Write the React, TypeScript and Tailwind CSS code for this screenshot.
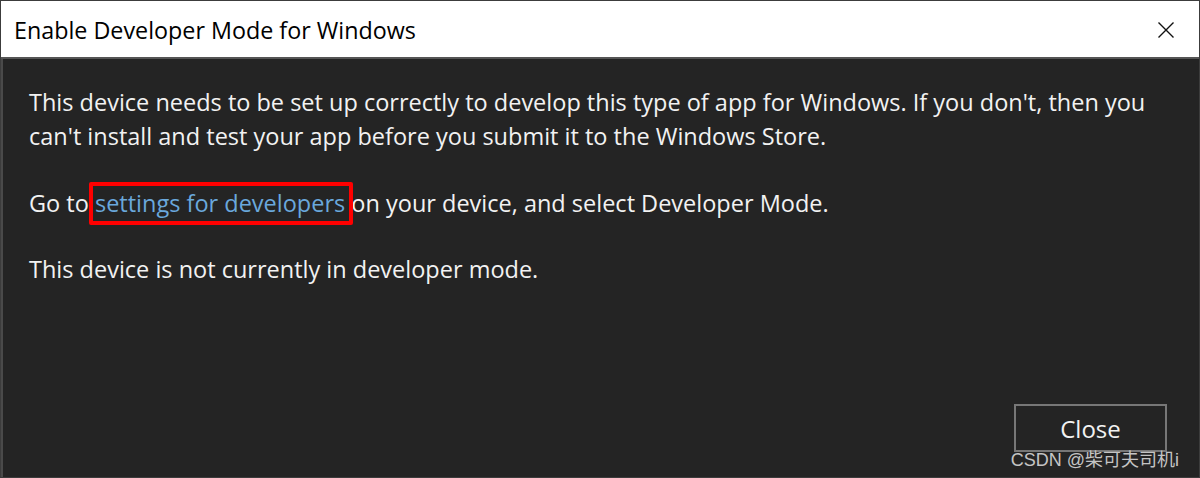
import React from "react";

const FONT = { fontFamily: '"Open Sans", "Noto Sans", sans-serif' };

export default function App() {
  return (
    <div
      className="relative flex h-[478px] w-[1200px] flex-col overflow-hidden border border-[#3c3c3c] bg-[#242424]"
      style={FONT}
    >
      {/* Title bar */}
      <div className="flex h-[58px] shrink-0 items-center justify-between border-b-2 border-[#555555] bg-white pl-[13px] pr-[24px]">
        <h1 className="mt-[4px] text-[23.3px] leading-none text-black">Enable Developer Mode for Windows</h1>
        <svg width="18" height="18" viewBox="0 0 18 18" className="mt-[2px]">
          <path d="M1.5 1.5 L16.5 16.5 M16.5 1.5 L1.5 16.5" stroke="#111" strokeWidth="1.4" fill="none" />
        </svg>
      </div>

      {/* Body */}
      <div className="flex flex-1 flex-col border-l-2 border-[#4a4a4a] pl-[26px] pr-[30px] pt-[26px] text-[23.5px] leading-[34px] text-[#f2f2f2]">
        <p>
          This device needs to be set up correctly to develop this type of app for Windows. If you don't, then you
          can't install and test your app before you submit it to the Windows Store.
        </p>
        <p className="mt-[33px]">
          Go to{" "}
          <span className="relative inline-block text-[#6aa8dc]">
            settings for developers
            <span className="pointer-events-none absolute -left-[6px] -right-[8px] -top-[4px] -bottom-[5px] rounded-[2px] border-[4px] border-[#ff0000]" />
          </span>{" "}
          on your device, and select Developer Mode.
        </p>
        <p className="mt-[32px]">This device is not currently in developer mode.</p>

        <div className="mt-auto mb-[25px] flex justify-end">
          <button className="mr-[2px] h-[48px] w-[153px] border-2 border-[#777777] pt-[2px] text-[24px] text-[#f2f2f2]">
            Close
          </button>
        </div>
      </div>

      {/* Watermark */}
      <span
        className="absolute bottom-[8px] right-[20px] text-[18px] leading-none text-[#c4c4c4]"
        style={{ fontFamily: '"Liberation Sans", "Noto Sans CJK SC", sans-serif' }}
      >
        CSDN @柴可夫司机i
      </span>
    </div>
  );
}
